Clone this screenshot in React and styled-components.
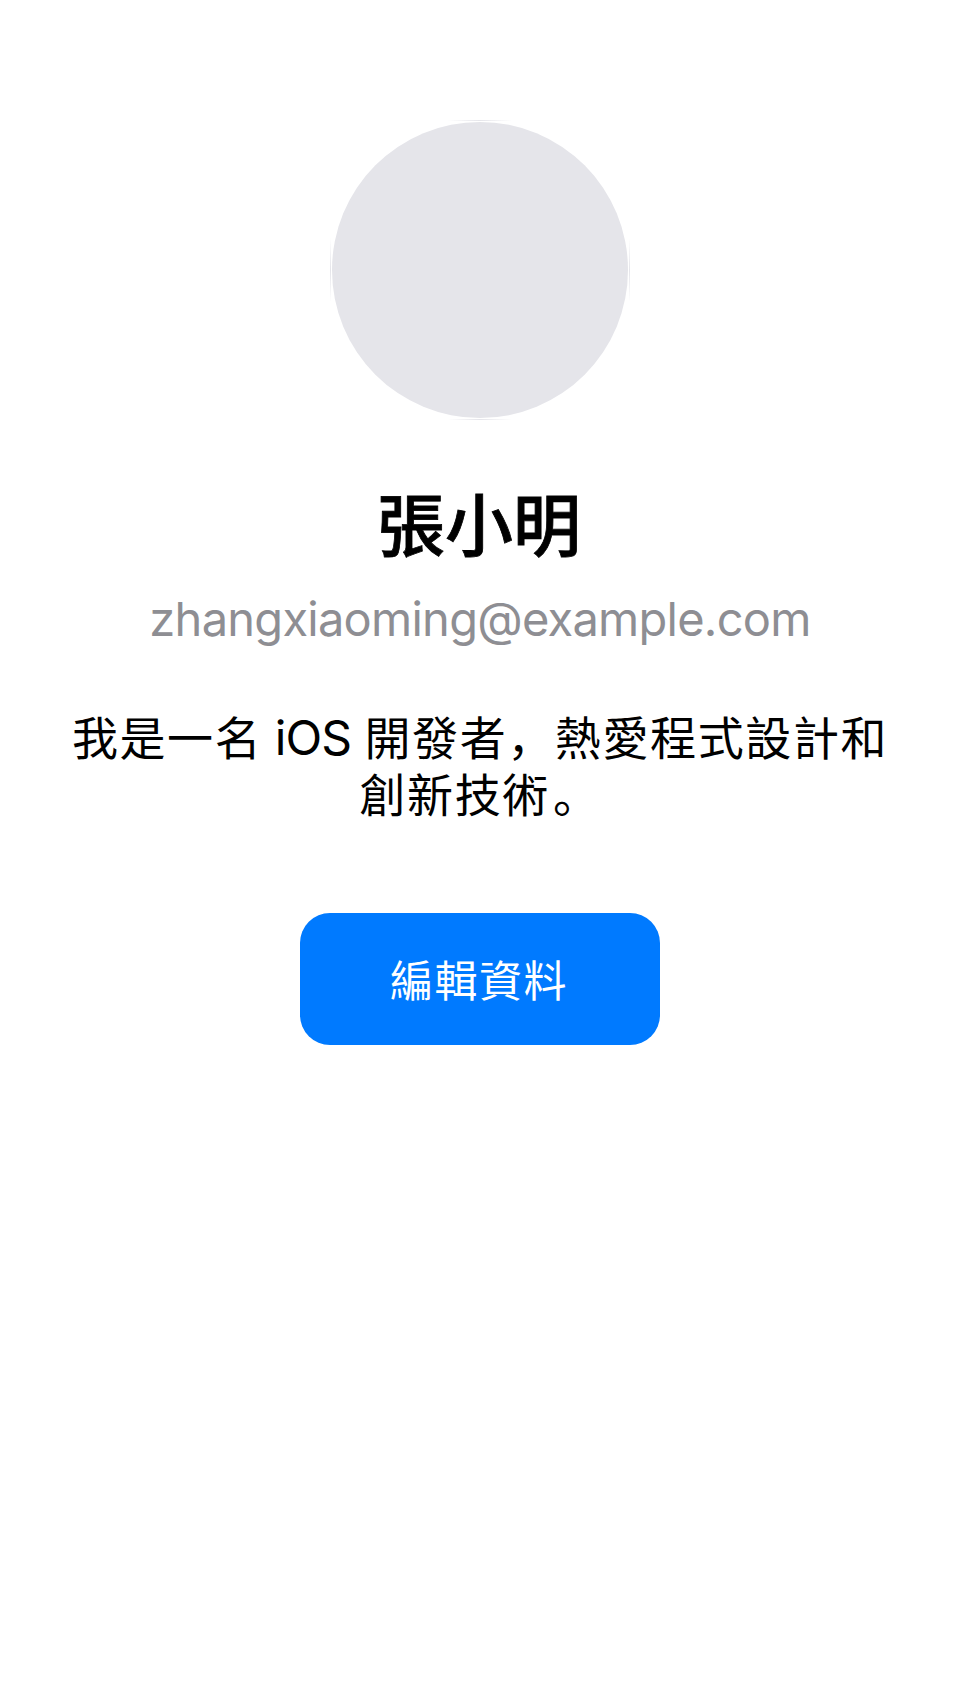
import React from "react";
import styled, { createGlobalStyle } from "styled-components";

const GlobalStyle = createGlobalStyle`
  body { margin: 0; background: #fff; font-family: Inter, "Noto Sans CJK SC", sans-serif; }
`;

const Screen = styled.main`
  box-sizing: border-box;
  min-height: 1704px;
  padding: 120px 60px 0;
  display: flex;
  flex-direction: column;
  align-items: center;
  background: #fff;
`;

const Avatar = styled.div`
  box-sizing: border-box;
  width: 300px;
  height: 300px;
  padding: 2px;
  background:
    linear-gradient(90deg, transparent, #e5e5ea, transparent) top / 64px 1px no-repeat,
    linear-gradient(90deg, transparent, #e5e5ea, transparent) bottom / 64px 1px no-repeat,
    linear-gradient(transparent, #e5e5ea, transparent) left / 1px 64px no-repeat,
    linear-gradient(transparent, #e5e5ea, transparent) right / 1px 64px no-repeat;

  &::before {
    content: "";
    display: block;
    height: 100%;
    border-radius: 50%;
    background: #e5e5ea;
  }
`;

const Name = styled.h1`
  margin: 57px 2px 0 0;
  font: 500 68px/90px "Noto Sans CJK TC", sans-serif;
  -webkit-text-stroke: 0.8px #000;
  color: #000;
`;

const Email = styled.p`
  margin: 24px 0 0;
  font-size: 47px;
  line-height: 56px;
  letter-spacing: -0.74px;
  color: #8e8e93;
`;

const Bio = styled.p`
  margin: 63px 0 0;
  font-size: 46px;
  line-height: 57px;
  letter-spacing: 1.6px;
  text-align: center;
  white-space: nowrap;
  color: #000;
`;

const Latin = styled.span`
  margin: 0 -1px 0 -2px;
  font-size: 48px;
  line-height: 1;
  letter-spacing: -1px;
`;

const FullStop = styled.span`
  margin-left: 3px;
`;

const EditButton = styled.button`
  margin: 89px 0 0;
  width: 360px;
  height: 132px;
  padding: 0 2px 2px 0;
  border: 0;
  border-radius: 30px;
  background: #007aff;
  color: #fff;
  font: 400 43px/60px "Noto Sans CJK TC", sans-serif;
  letter-spacing: 1.5px;
`;

export default function App() {
  return (
    <>
      <GlobalStyle />
      <Screen>
        <Avatar />
        <Name>張小明</Name>
        <Email>zhangxiaoming@example.com</Email>
        <Bio lang="zh-Hans">
          我是一名 <Latin>iOS</Latin> 開發者，熱愛程式設計和
          <br />
          創新技術<FullStop>。</FullStop>
        </Bio>
        <EditButton>編輯資料</EditButton>
      </Screen>
    </>
  );
}
